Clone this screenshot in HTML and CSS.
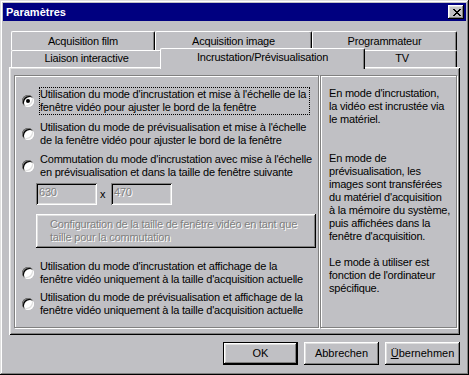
FILE: index.html
```html
<!DOCTYPE html>
<html>
    <head>
        <meta charset="UTF-8">
        <title>Paramètres</title>
        <link rel="stylesheet" href="styles.css">
    </head>
    <body>
        <div class="window">
            <div class="titlebar">
                <span class="title">Paramètres</span>
                <span class="close-btn">
                    <svg width="8" height="7" viewBox="0 0 8 7" shape-rendering="crispEdges">
                        <path d="M0 0h2v1h-2zM6 0h2v1h-2zM1 1h2v1h-2zM5 1h2v1h-2zM2 2h4v1h-4zM3 3h2v1h-2zM2 4h4v1h-4zM1 5h2v1h-2zM5 5h2v1h-2zM0 6h2v1h-2zM6 6h2v1h-2z" fill="#000"/>
                    </svg>
                </span>
            </div>

            <div class="tabs">
                <div class="tab-row back">
                    <div class="tab w-film">Acquisition film</div>
                    <div class="tab w-image">Acquisition image</div>
                    <div class="tab w-prog">Programmateur</div>
                </div>
                <div class="tab-row front">
                    <div class="tab w-liaison">Liaison interactive</div>
                    <div class="tab w-incr active">Incrustation/Prévisualisation</div>
                    <div class="tab w-tv">TV</div>
                </div>
            </div>

            <div class="panel">
                <div class="group options">
                    <div class="option first">
                        <span class="radio checked"></span>
                        <div class="label focused">Utilisation du mode d'incrustation et mise à l'échelle de la<br>fenêtre vidéo pour ajuster le bord de la fenêtre</div>
                    </div>
                    <div class="option second">
                        <span class="radio"></span>
                        <div class="label">Utilisation du mode de prévisualisation et mise à l'échelle<br>de la fenêtre vidéo pour ajuster le bord de la fenêtre</div>
                    </div>
                    <div class="option third">
                        <span class="radio"></span>
                        <div class="label">Commutation du mode d'incrustation avec mise à l'échelle<br>en prévisualisation et dans la taille de fenêtre suivante</div>
                    </div>
                    <div class="size-row">
                        <div class="field">630</div>
                        <span class="times">x</span>
                        <div class="field">470</div>
                    </div>
                    <div class="config-btn">Configuration de la taille de fenêtre vidéo en tant que<br>taille pour la commutation</div>
                    <div class="option fourth">
                        <span class="radio"></span>
                        <div class="label">Utilisation du mode d'incrustation et affichage de la<br>fenêtre vidéo uniquement à la taille d'acquisition actuelle</div>
                    </div>
                    <div class="option fifth">
                        <span class="radio"></span>
                        <div class="label">Utilisation du mode de prévisualisation et affichage de la<br>fenêtre vidéo uniquement à la taille d'acquisition actuelle</div>
                    </div>
                </div>
                <div class="group info">
                    <p class="gap2">En mode d'incrustation,<br>la vidéo est incrustée via<br>le matériel.</p>
                    <p class="gap1">En mode de<br>prévisualisation, les<br>images sont transférées<br>du matériel d'acquisition<br>à la mémoire du système,<br>puis affichées dans la<br>fenêtre d'acquisition.</p>
                    <p>Le mode à utiliser est<br>fonction de l'ordinateur<br>spécifique.</p>
                </div>
            </div>

            <div class="actions">
                <button class="btn default">OK</button>
                <button class="btn">Abbrechen</button>
                <button class="btn"><u>Ü</u>bernehmen</button>
            </div>
        </div>
    </body>
</html>
```

FILE: styles.css
```css
* {
    box-sizing: border-box;
}

html, body {
    margin: 0;
    padding: 0;
}

body {
    background: #c0c0c4;
    font-family: "Liberation Sans", Arial, sans-serif;
    font-size: 11px;
    line-height: 13px;
    letter-spacing: -0.2px;
    color: #000;
}

.window {
    width: 469px;
    height: 375px;
    padding: 3px;
    background: #c0c0c4;
    box-shadow: inset -1px -1px #000, inset 1px 1px #dfdfdf, inset -2px -2px #808080, inset 2px 2px #fff;
}

/* title bar */
.titlebar {
    height: 18px;
    background: #000080;
    display: flex;
    align-items: center;
    justify-content: space-between;
    padding: 0 2px 0 3px;
}

.title {
    color: #fff;
    font-weight: bold;
    letter-spacing: 0;
}

.close-btn {
    width: 16px;
    height: 14px;
    display: flex;
    align-items: center;
    justify-content: center;
    padding-left: 1px;
    background: #c0c0c4;
    box-shadow: inset -1px -1px #000, inset 1px 1px #fff, inset -2px -2px #808080, inset 2px 2px #dfdfdf;
}

/* tabs */
.tabs {
    margin: 10px 8px 0;
}

.tab-row {
    display: flex;
}

.tab-row.back {
    height: 19px;
}

.tab-row.front {
    height: 17px;
}

.tab {
    display: flex;
    justify-content: center;
    border-top: 1px solid #fff;
    border-left: 1px solid #fff;
    border-right: 1px solid #000;
    border-radius: 2px 2px 0 0;
    box-shadow: inset -1px 0 #808080;
    white-space: nowrap;
}

.back .tab {
    padding-top: 3px;
}

.front .tab {
    padding-top: 1px;
}

.w-film { width: 144px; }
.w-image { width: 157px; }
.w-prog { width: 145px; }
.w-liaison { width: 151px; }
.w-tv { width: 94px; padding-right: 16px; }

.tab.active {
    width: 205px;
    margin: -2px -2px -2px;
    padding-top: 2px;
    position: relative;
    z-index: 1;
    background: #c0c0c4;
}

/* panel */
.panel {
    display: flex;
    gap: 1px;
    height: 268px;
    margin: 0 6px;
    padding: 8px 3px 0 5px;
    box-shadow: inset 1px 1px #fff, inset -1px -1px #000, inset 2px 2px #dfdfdf, inset -2px -2px #808080;
}

.group {
    height: 253px;
    border: 1px solid #808080;
    box-shadow: inset 1px 1px #fff, 1px 1px #fff;
}

.options {
    width: 305px;
    padding: 11px 0 0 7px;
}

.info {
    width: 137px;
    padding: 11px 0 0 8px;
}

.info p {
    margin: 0;
}

.info .gap2 {
    margin-bottom: 26px;
}

.info .gap1 {
    margin-bottom: 13px;
}

.option {
    display: flex;
    align-items: center;
    gap: 5px;
}

.option.second { margin-top: 5px; }
.option.third { margin-top: 4px; }
.option.fourth { margin-top: 11px; }
.option.fifth { margin-top: 3px; }

.radio {
    position: relative;
    width: 12px;
    height: 12px;
    flex: none;
    border-radius: 50%;
    background: #fff;
    box-shadow: inset 1px 1px #808080, inset -1px -1px #fff, inset 2px 2px #000, inset -2px -2px #dfdfdf;
}

.radio.checked::after {
    content: "";
    position: absolute;
    left: 4px;
    top: 4px;
    width: 4px;
    height: 4px;
    border-radius: 50%;
    background: #000;
}

.label {
    width: 271px;
    border: 1px dotted transparent;
    white-space: nowrap;
}

.label.focused {
    border-color: #000;
}

.size-row {
    display: flex;
    align-items: center;
    margin: 3px 0 0 14px;
}

.field {
    width: 61px;
    height: 22px;
    padding: 3px 0 0 3px;
    color: #808080;
    text-shadow: 1px 1px #fff;
    box-shadow: inset 1px 1px #808080, inset -1px -1px #fff, inset 2px 2px #000, inset -2px -2px #dfdfdf;
}

.times {
    width: 14px;
    padding-left: 3px;
}

.config-btn {
    width: 280px;
    height: 34px;
    margin: 9px 0 0 14px;
    padding: 4px 0 0 14px;
    color: #808080;
    text-shadow: 1px 1px #fff;
    white-space: nowrap;
    box-shadow: inset -1px -1px #000, inset 1px 1px #fff, inset -2px -2px #808080, inset 2px 2px #dfdfdf;
}

/* dialog buttons */
.actions {
    display: flex;
    justify-content: flex-end;
    gap: 6px;
    margin: 7px 6px 0;
}

.btn {
    width: 75px;
    height: 23px;
    padding: 0;
    border: none;
    background: #c0c0c4;
    font: inherit;
    color: #000;
    box-shadow: inset -1px -1px #000, inset 1px 1px #fff, inset -2px -2px #808080, inset 2px 2px #dfdfdf;
}

.btn.default {
    border: 1px solid #000;
}
```
